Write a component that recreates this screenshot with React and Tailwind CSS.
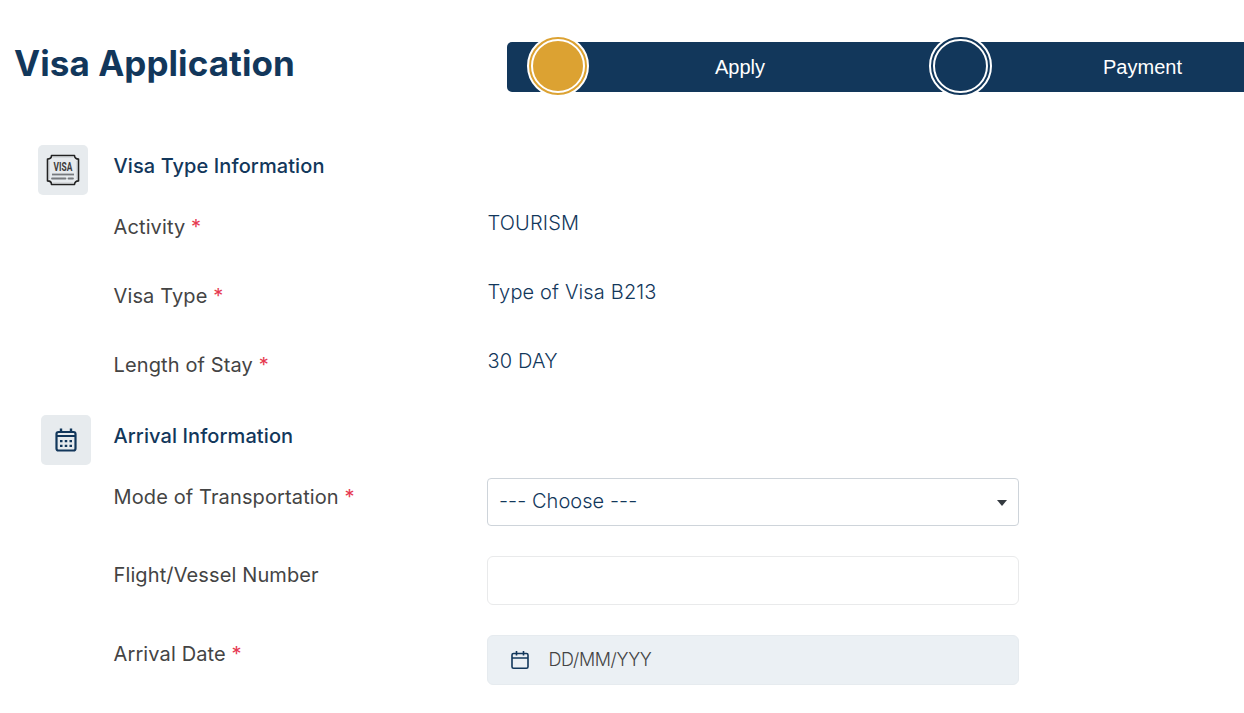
import { useState } from 'react'

const steps = [
  { label: 'Apply', active: true },
  { label: 'Payment', active: false },
]

const visaRows = [
  { label: 'Activity', value: 'TOURISM' },
  { label: 'Visa Type', value: 'Type of Visa B213' },
  { label: 'Length of Stay', value: '30 DAY' },
]

function VisaIcon() {
  return (
    <svg width="36" height="32" viewBox="0 0 36 32" fill="none">
      <path
        d="M6.5 1.5h23c0 2.2 1.6 3.6 4 3.6v21.8c-2.4 0-4 1.4-4 3.6h-23c0-2.2-1.6-3.6-4-3.6V5.1c2.4 0 4-1.4 4-3.6z"
        stroke="#222"
        strokeWidth="1.6"
        strokeLinejoin="round"
      />
      <path d="M7.5 3.3h21M4.3 7v18M31.7 7v18M7.5 28.7h21" stroke="#c4c7cb" strokeWidth="0.6" />
      <text
        x="18"
        y="16.8"
        textAnchor="middle"
        textLength="27"
        lengthAdjust="spacing"
        fontFamily="Roboto, sans-serif"
        fontSize="12"
        fontWeight="700"
        transform="translate(5.4 0) scale(0.7 1)"
        fill="#3c3c3c"
      >
        VISA
      </text>
      <path d="M7 20.5h22" stroke="#777a7e" strokeWidth="1.8" />
      <path d="M7 24.5h13.5M23.5 24.5H28" stroke="#777a7e" strokeWidth="1.8" strokeLinecap="round" />
    </svg>
  )
}

function CalendarGridIcon() {
  return (
    <svg width="22" height="24" viewBox="0 0 22 24" fill="none">
      <rect x="1.5" y="4" width="19" height="18.5" rx="2" stroke="#12375b" strokeWidth="2.2" />
      <path d="M6 0.5v4M16 0.5v4" stroke="#12375b" strokeWidth="2.4" />
      <path d="M2 8h18" stroke="#12375b" strokeWidth="2" />
      <path
        d="M5 13.2h2.5M9.75 13.2h2.5M14.5 13.2h2.5M5 17.8h2.5M9.75 17.8h2.5M14.5 17.8h2.5"
        stroke="#12375b"
        strokeWidth="2.3"
      />
    </svg>
  )
}

function CalendarIcon() {
  return (
    <svg width="18" height="20" viewBox="0 0 18 20" fill="none">
      <rect x="1" y="3.5" width="16" height="14.7" rx="1.5" stroke="#12375b" strokeWidth="1.6" />
      <path d="M5.5 1v4.5M12.5 1v4.5M1 8h16" stroke="#12375b" strokeWidth="1.6" />
    </svg>
  )
}

function StepDot({ active }) {
  return (
    <div
      className={
        'mb-0.5 h-[62px] shrink-0 rounded-full border-2 border-white p-0.5 ' +
        (active ? 'w-[62px] bg-[#dca232]' : 'w-[63px] bg-[#12375b]')
      }
    >
      <div className="size-full rounded-full border-2 border-white" />
    </div>
  )
}

function Label({ children, required }) {
  return (
    <div className="w-[373px] shrink-0 text-[20px] leading-6 tracking-[0.12px] text-[#444]">
      {children}
      {required && <span className="text-[#e63950]"> *</span>}
    </div>
  )
}

function Section({ icon, title, children, iconBox }) {
  return (
    <section className="flex">
      <div className="w-[113.5px] shrink-0">
        <div className={'flex size-[50px] items-center justify-center rounded-[5px] bg-[#e7ebee] ' + iconBox}>
          {icon}
        </div>
      </div>
      <div className="flex-1 pt-[9px]">
        <h2 className="text-[20px] leading-6 font-medium tracking-[0.09px] text-[#12375b]">{title}</h2>
        {children}
      </div>
    </section>
  )
}

export default function App() {
  const [flight, setFlight] = useState('')

  return (
    <div className="h-[713px] w-[1244px] overflow-hidden bg-white font-['Inter',sans-serif]">
      <header className="flex h-[145px] items-start">
        <h1 className="w-[507px] shrink-0 pt-[41px] pl-[14px] text-[35px] leading-[44px] font-bold tracking-[0.06px] text-[#12375b]">
          Visa Application
        </h1>
        <div className="mt-[42px] flex h-[50px] w-[805px] shrink-0 items-center rounded-[5px] bg-[#12375b] pl-5">
          {steps.map((s) => (
            <div key={s.label} className="flex w-[402px] shrink-0 items-center">
              <StepDot active={s.active} />
              <div
                className={
                  "text-center font-['Liberation_Sans',sans-serif] text-[20px] text-white " +
                  (s.active ? 'w-[302px]' : 'w-[301px]')
                }
              >
                {s.label}
              </div>
            </div>
          ))}
        </div>
      </header>

      <div className="h-[270px]">
        <Section title="Visa Type Information" icon={<VisaIcon />} iconBox="ml-[38px]">
          <div className="pt-[33px]">
            {visaRows.map((r) => (
              <div key={r.label} className="flex h-[69px] items-start">
                <div className="pt-1">
                  <Label required>{r.label}</Label>
                </div>
                <div className="pl-px text-[20px] leading-6 font-light tracking-[0.15px] text-[#12375b]">
                  {r.value}
                </div>
              </div>
            ))}
          </div>
        </Section>
      </div>

      <Section title="Arrival Information" icon={<CalendarGridIcon />} iconBox="ml-[41px]">
        <div className="flex flex-col pt-[30px]">
          <div className="flex h-[78px] items-start">
            <div className="pt-[7px]">
              <Label required>Mode of Transportation</Label>
            </div>
            <button className="ml-[0.5px] flex h-12 w-[532px] items-center justify-between rounded border border-[#ced4da] bg-white px-[11px] pb-0.5 text-[20px] leading-6 font-light tracking-[0.05px] text-[#12375b]">
              <span>--- Choose ---</span>
              <svg width="10" height="6" viewBox="0 0 10 6" className="mt-1">
                <path d="M0 0h10L5 6z" fill="#343a40" />
              </svg>
            </button>
          </div>
          <div className="flex h-[79px] items-start">
            <div className="pt-[7px]">
              <Label>Flight/Vessel Number</Label>
            </div>
            <input
              value={flight}
              onChange={(e) => setFlight(e.target.value)}
              className="ml-[0.5px] h-[49px] w-[532px] rounded-[6px] border border-[#e9eaeb] px-3 text-[20px] text-[#12375b] outline-none"
            />
          </div>
          <div className="flex items-start">
            <div className="pt-[7px]">
              <Label required>Arrival Date</Label>
            </div>
            <div className="ml-[0.5px] flex h-[50px] w-[532px] items-center rounded-[6px] border border-[#e6ebef] bg-[#ebf0f4] pl-[23px]">
              <CalendarIcon />
              <span className="pl-[19.5px] text-[18px] leading-6 font-light tracking-[-0.35px] text-[#444]">
                DD/MM/YYY
              </span>
            </div>
          </div>
        </div>
      </Section>
    </div>
  )
}
